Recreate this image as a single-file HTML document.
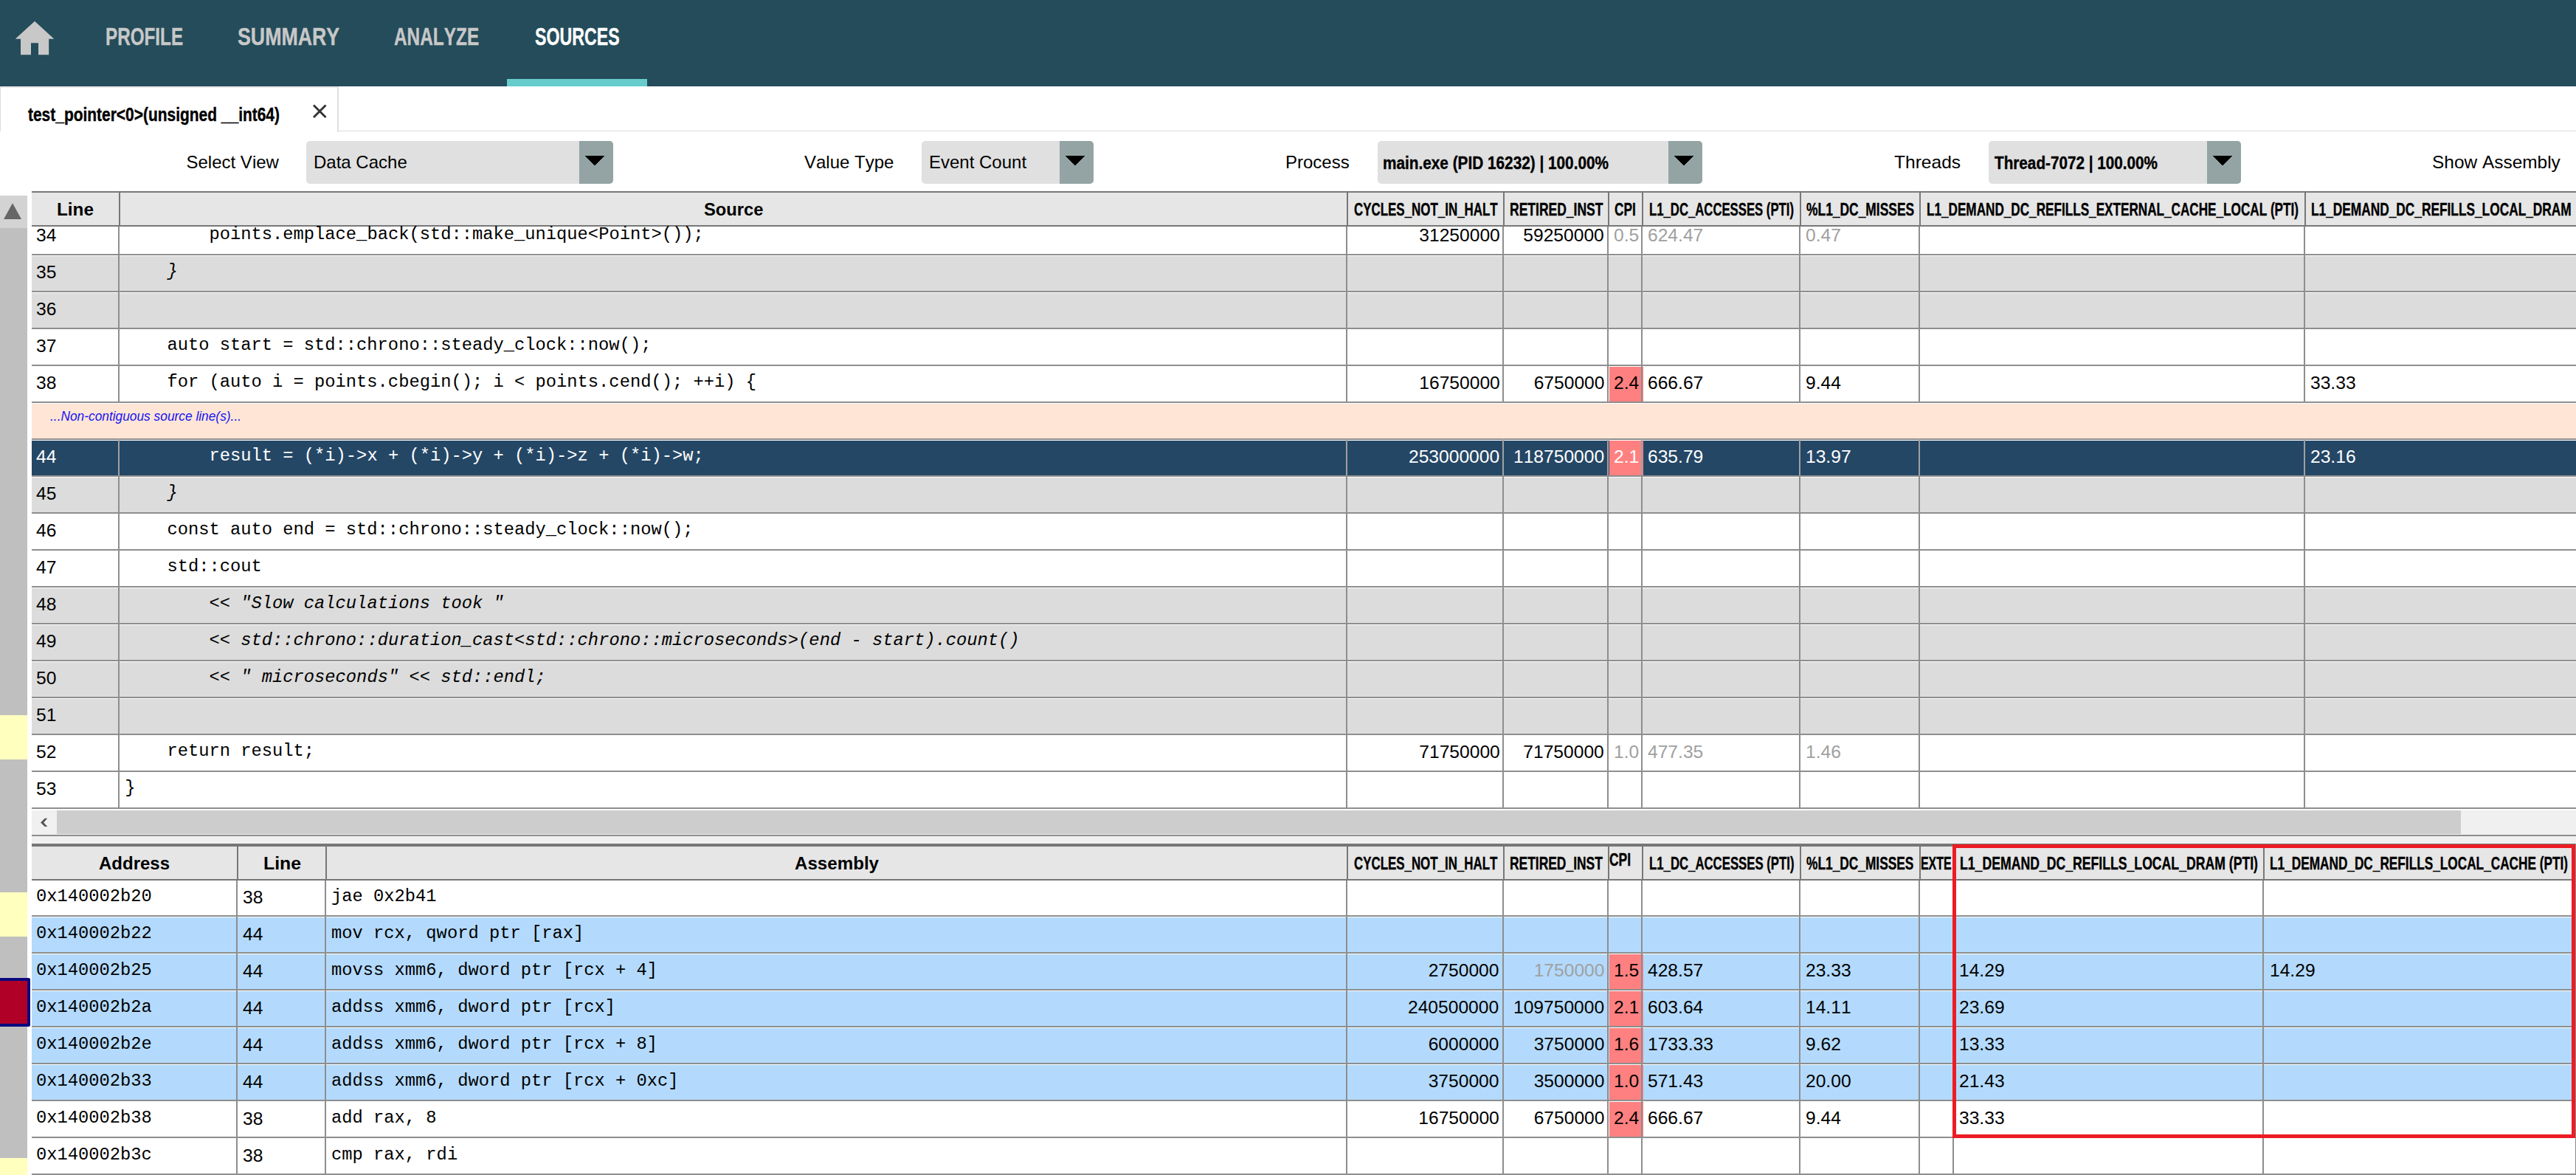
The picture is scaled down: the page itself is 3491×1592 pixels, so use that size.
<!DOCTYPE html>
<html><head><meta charset="utf-8"><title>Sources</title>
<style>
html,body{margin:0;padding:0;}
body{width:3491px;height:1592px;position:relative;overflow:hidden;background:#fff;font-family:"Liberation Sans", sans-serif;font-kerning:none;}
.r{position:absolute;}
.t{position:absolute;white-space:pre;}
</style></head><body>
<div class="r" style="left:0px;top:0px;width:3491px;height:117px;background:#244c5a;"></div>
<svg class="r" style="left:0;top:0" width="100" height="100"><polygon points="20.7,52.8 47,28.8 73.3,52.8 66.2,52.8 66.2,74.3 52,74.3 52,58.2 42,58.2 42,74.3 28,74.3 28,52.8" fill="#c8c8c8"/></svg>
<div class="t" style="left:142.80px;top:33.24px;font-size:33.5px;line-height:33.5px;color:#c8c8c8;font-family:'Liberation Sans', sans-serif;font-weight:bold;transform:scaleX(0.7240);transform-origin:0 0;-webkit-text-stroke:0.4px #c8c8c8;">PROFILE</div>
<div class="t" style="left:321.90px;top:33.24px;font-size:33.5px;line-height:33.5px;color:#c8c8c8;font-family:'Liberation Sans', sans-serif;font-weight:bold;transform:scaleX(0.7985);transform-origin:0 0;-webkit-text-stroke:0.4px #c8c8c8;">SUMMARY</div>
<div class="t" style="left:533.70px;top:33.24px;font-size:33.5px;line-height:33.5px;color:#c8c8c8;font-family:'Liberation Sans', sans-serif;font-weight:bold;transform:scaleX(0.7282);transform-origin:0 0;-webkit-text-stroke:0.4px #c8c8c8;">ANALYZE</div>
<div class="t" style="left:724.70px;top:33.24px;font-size:33.5px;line-height:33.5px;color:#ffffff;font-family:'Liberation Sans', sans-serif;font-weight:bold;transform:scaleX(0.6917);transform-origin:0 0;-webkit-text-stroke:0.4px #ffffff;">SOURCES</div>
<div class="r" style="left:687px;top:107px;width:190px;height:10px;background:#66cccc;"></div>
<div class="r" style="left:0px;top:117px;width:459px;height:2px;background:#e8e8e8;"></div>
<div class="r" style="left:0px;top:117px;width:1px;height:61px;background:#dcdcdc;"></div>
<div class="r" style="left:457px;top:117px;width:2px;height:62px;background:#e0e0e0;"></div>
<div class="r" style="left:459px;top:177px;width:3032px;height:1px;background:#dcdcdc;"></div>
<div class="t" style="left:38.00px;top:141.89px;font-size:26px;line-height:26px;color:#000;font-family:'Liberation Sans', sans-serif;font-weight:bold;transform:scaleX(0.8055);transform-origin:0 0;-webkit-text-stroke:0.4px #000;">test_pointer&lt;0&gt;(unsigned __int64)</div>
<svg class="r" style="left:420px;top:138px" width="26" height="26"><path d="M5,4.5 L21.5,21 M21.5,4.5 L5,21" stroke="#333" stroke-width="2.9" fill="none"/></svg>
<div class="t" style="left:252.50px;top:208.48px;font-size:24px;line-height:24px;color:#000;">Select View</div>
<div class="r" style="left:415px;top:191px;width:416px;height:58px;background:#e0e0e0;border-radius:5px;"></div>
<div class="r" style="left:785px;top:191px;width:46px;height:58px;background:#94a4a4;border-radius:0 5px 5px 0;"></div>
<svg class="r" style="left:793px;top:211px" width="26" height="15"><polygon points="0,0 26,0 13,14" fill="#000" shape-rendering="crispEdges"/></svg>
<div class="t" style="left:425.00px;top:208.48px;font-size:24px;line-height:24px;color:#000;">Data Cache</div>
<div class="t" style="left:1090.00px;top:208.48px;font-size:24px;line-height:24px;color:#000;">Value Type</div>
<div class="r" style="left:1249px;top:191px;width:233px;height:58px;background:#e0e0e0;border-radius:5px;"></div>
<div class="r" style="left:1436px;top:191px;width:46px;height:58px;background:#94a4a4;border-radius:0 5px 5px 0;"></div>
<svg class="r" style="left:1444px;top:211px" width="26" height="15"><polygon points="0,0 26,0 13,14" fill="#000" shape-rendering="crispEdges"/></svg>
<div class="t" style="left:1259.00px;top:208.48px;font-size:24px;line-height:24px;color:#000;">Event Count</div>
<div class="t" style="left:1742.00px;top:208.48px;font-size:24px;line-height:24px;color:#000;">Process</div>
<div class="r" style="left:1867px;top:191px;width:440px;height:58px;background:#e0e0e0;border-radius:5px;"></div>
<div class="r" style="left:2261px;top:191px;width:46px;height:58px;background:#94a4a4;border-radius:0 5px 5px 0;"></div>
<svg class="r" style="left:2269px;top:211px" width="26" height="15"><polygon points="0,0 26,0 13,14" fill="#000" shape-rendering="crispEdges"/></svg>
<div class="t" style="left:1874.00px;top:209.90px;font-size:23.5px;line-height:23.5px;color:#000;font-family:'Liberation Sans', sans-serif;font-weight:bold;transform:scaleX(0.8838);transform-origin:0 0;-webkit-text-stroke:0.4px #000;">main.exe (PID 16232) | 100.00%</div>
<div class="t" style="left:2566.50px;top:208.48px;font-size:24px;line-height:24px;color:#000;transform:scaleX(1.0230);transform-origin:0 0;">Threads</div>
<div class="r" style="left:2695px;top:191px;width:342px;height:58px;background:#e0e0e0;border-radius:5px;"></div>
<div class="r" style="left:2991px;top:191px;width:46px;height:58px;background:#94a4a4;border-radius:0 5px 5px 0;"></div>
<svg class="r" style="left:2999px;top:211px" width="26" height="15"><polygon points="0,0 26,0 13,14" fill="#000" shape-rendering="crispEdges"/></svg>
<div class="t" style="left:2702.50px;top:209.90px;font-size:23.5px;line-height:23.5px;color:#000;font-family:'Liberation Sans', sans-serif;font-weight:bold;transform:scaleX(0.8810);transform-origin:0 0;-webkit-text-stroke:0.4px #000;">Thread-7072 | 100.00%</div>
<div class="t" style="left:3296.30px;top:208.48px;font-size:24px;line-height:24px;color:#000;transform:scaleX(1.0180);transform-origin:0 0;">Show Assembly</div>
<div class="r" style="left:0px;top:265px;width:37px;height:44px;background:#d3d3d3;"></div>
<svg class="r" style="left:0;top:265px" width="37" height="44"><polygon points="5,32 29,32 17,10.3" fill="#666"/></svg>
<div class="r" style="left:0px;top:309px;width:37px;height:1283px;background:#bfbfbf;"></div>
<div class="r" style="left:0px;top:969px;width:37px;height:60px;background:#ffffbe;"></div>
<div class="r" style="left:0px;top:1209px;width:37px;height:60px;background:#ffffbe;"></div>
<div class="r" style="left:0px;top:1325px;width:41px;height:66px;background:#b00028;box-sizing:border-box;border:4px solid #0a0a7e;border-left:none;border-radius:0 3px 3px 0;"></div>
<div class="r" style="left:0px;top:1569px;width:37px;height:23px;background:#ffffbe;"></div>
<div class="r" style="left:43px;top:259px;width:3448px;height:2px;background:#777777;"></div>
<div class="r" style="left:43px;top:261px;width:3448px;height:44px;background:#e6e6e6;"></div>
<div class="r" style="left:43px;top:305px;width:3448px;height:2px;background:#777777;"></div>
<div class="r" style="left:161px;top:261px;width:2px;height:44px;background:#777777;"></div>
<div class="r" style="left:1825px;top:261px;width:2px;height:44px;background:#777777;"></div>
<div class="r" style="left:2037px;top:261px;width:2px;height:44px;background:#777777;"></div>
<div class="r" style="left:2179px;top:261px;width:2px;height:44px;background:#777777;"></div>
<div class="r" style="left:2225px;top:261px;width:2px;height:44px;background:#777777;"></div>
<div class="r" style="left:2439px;top:261px;width:2px;height:44px;background:#777777;"></div>
<div class="r" style="left:2601px;top:261px;width:2px;height:44px;background:#777777;"></div>
<div class="r" style="left:3123px;top:261px;width:2px;height:44px;background:#777777;"></div>
<div class="t" style="left:77.00px;top:272.48px;font-size:24px;line-height:24px;color:#000;font-family:'Liberation Sans', sans-serif;font-weight:bold;transform:scaleX(1.0135);transform-origin:0 0;">Line</div>
<div class="t" style="left:953.50px;top:272.48px;font-size:24px;line-height:24px;color:#000;font-family:'Liberation Sans', sans-serif;font-weight:bold;transform:scaleX(0.9894);transform-origin:0 0;">Source</div>
<div class="t" style="left:1834.50px;top:272.48px;font-size:24px;line-height:24px;color:#000;font-family:'Liberation Sans', sans-serif;font-weight:bold;transform:scaleX(0.7053);transform-origin:0 0;-webkit-text-stroke:0.4px #000;">CYCLES_NOT_IN_HALT</div>
<div class="t" style="left:2046.00px;top:272.48px;font-size:24px;line-height:24px;color:#000;font-family:'Liberation Sans', sans-serif;font-weight:bold;transform:scaleX(0.7297);transform-origin:0 0;-webkit-text-stroke:0.4px #000;">RETIRED_INST</div>
<div class="t" style="left:2188.30px;top:272.48px;font-size:24px;line-height:24px;color:#000;font-family:'Liberation Sans', sans-serif;font-weight:bold;transform:scaleX(0.7174);transform-origin:0 0;-webkit-text-stroke:0.4px #000;">CPI</div>
<div class="t" style="left:2234.50px;top:272.48px;font-size:24px;line-height:24px;color:#000;font-family:'Liberation Sans', sans-serif;font-weight:bold;transform:scaleX(0.6965);transform-origin:0 0;-webkit-text-stroke:0.4px #000;">L1_DC_ACCESSES (PTI)</div>
<div class="t" style="left:2448.00px;top:272.48px;font-size:24px;line-height:24px;color:#000;font-family:'Liberation Sans', sans-serif;font-weight:bold;transform:scaleX(0.7259);transform-origin:0 0;-webkit-text-stroke:0.4px #000;">%L1_DC_MISSES</div>
<div class="t" style="left:2611.20px;top:272.48px;font-size:24px;line-height:24px;color:#000;font-family:'Liberation Sans', sans-serif;font-weight:bold;transform:scaleX(0.7145);transform-origin:0 0;-webkit-text-stroke:0.4px #000;">L1_DEMAND_DC_REFILLS_EXTERNAL_CACHE_LOCAL (PTI)</div>
<div class="t" style="left:3131.50px;top:272.48px;font-size:24px;line-height:24px;color:#000;font-family:'Liberation Sans', sans-serif;font-weight:bold;transform:scaleX(0.7207);transform-origin:0 0;-webkit-text-stroke:0.4px #000;">L1_DEMAND_DC_REFILLS_LOCAL_DRAM</div>
<div class="r" style="left:43px;top:307px;width:3448px;height:37px;background:#ffffff;"></div>
<div class="r" style="left:160px;top:307px;width:2px;height:39px;background:#8e8e8e;"></div>
<div class="r" style="left:1824px;top:307px;width:2px;height:39px;background:#8e8e8e;"></div>
<div class="r" style="left:2036px;top:307px;width:2px;height:39px;background:#8e8e8e;"></div>
<div class="r" style="left:2178px;top:307px;width:2px;height:39px;background:#8e8e8e;"></div>
<div class="r" style="left:2224px;top:307px;width:2px;height:39px;background:#8e8e8e;"></div>
<div class="r" style="left:2438px;top:307px;width:2px;height:39px;background:#8e8e8e;"></div>
<div class="r" style="left:2600px;top:307px;width:2px;height:39px;background:#8e8e8e;"></div>
<div class="r" style="left:3122px;top:307px;width:2px;height:39px;background:#8e8e8e;"></div>
<div class="r" style="left:43px;top:344px;width:3448px;height:2px;background:#8e8e8e;"></div>
<div class="t" style="left:48.50px;top:306.88px;font-size:24px;line-height:24px;color:#000;transform:scaleX(1.0250);transform-origin:0 0;">34</div>
<div class="t" style="left:283.46px;top:306.28px;font-size:23.78px;line-height:23.78px;color:#000;font-family:'Liberation Mono', monospace;">points.emplace_back(std::make_unique&lt;Point&gt;());</div>
<div class="t" style="left:1925.72px;top:306.58px;font-size:24px;line-height:24px;color:#000;transform:scaleX(1.0250);transform-origin:100% 0;">31250000</div>
<div class="t" style="left:2067.22px;top:306.58px;font-size:24px;line-height:24px;color:#000;transform:scaleX(1.0250);transform-origin:100% 0;">59250000</div>
<div class="t" style="left:2187.00px;top:306.58px;font-size:24px;line-height:24px;color:#a0a0a0;transform:scaleX(1.0250);transform-origin:0 0;">0.5</div>
<div class="t" style="left:2232.50px;top:306.58px;font-size:24px;line-height:24px;color:#a0a0a0;transform:scaleX(1.0250);transform-origin:0 0;">624.47</div>
<div class="t" style="left:2446.50px;top:306.58px;font-size:24px;line-height:24px;color:#a0a0a0;transform:scaleX(1.0250);transform-origin:0 0;">0.47</div>
<div class="r" style="left:43px;top:346px;width:3448px;height:1px;background:#ffffff;"></div>
<div class="r" style="left:43px;top:347px;width:3448px;height:47px;background:#dcdcdc;"></div>
<div class="r" style="left:160px;top:344px;width:2px;height:52px;background:#8e8e8e;"></div>
<div class="r" style="left:1824px;top:344px;width:2px;height:52px;background:#8e8e8e;"></div>
<div class="r" style="left:2036px;top:344px;width:2px;height:52px;background:#8e8e8e;"></div>
<div class="r" style="left:2178px;top:344px;width:2px;height:52px;background:#8e8e8e;"></div>
<div class="r" style="left:2224px;top:344px;width:2px;height:52px;background:#8e8e8e;"></div>
<div class="r" style="left:2438px;top:344px;width:2px;height:52px;background:#8e8e8e;"></div>
<div class="r" style="left:2600px;top:344px;width:2px;height:52px;background:#8e8e8e;"></div>
<div class="r" style="left:3122px;top:344px;width:2px;height:52px;background:#8e8e8e;"></div>
<div class="r" style="left:43px;top:394px;width:3448px;height:2px;background:#8e8e8e;"></div>
<div class="t" style="left:48.50px;top:356.88px;font-size:24px;line-height:24px;color:#000;transform:scaleX(1.0250);transform-origin:0 0;">35</div>
<div class="t" style="left:226.38px;top:356.28px;font-size:23.78px;line-height:23.78px;color:#000;font-family:'Liberation Mono', monospace;font-style:italic;">}</div>
<div class="r" style="left:43px;top:396px;width:3448px;height:1px;background:#ffffff;"></div>
<div class="r" style="left:43px;top:397px;width:3448px;height:47px;background:#dcdcdc;"></div>
<div class="r" style="left:160px;top:394px;width:2px;height:52px;background:#8e8e8e;"></div>
<div class="r" style="left:1824px;top:394px;width:2px;height:52px;background:#8e8e8e;"></div>
<div class="r" style="left:2036px;top:394px;width:2px;height:52px;background:#8e8e8e;"></div>
<div class="r" style="left:2178px;top:394px;width:2px;height:52px;background:#8e8e8e;"></div>
<div class="r" style="left:2224px;top:394px;width:2px;height:52px;background:#8e8e8e;"></div>
<div class="r" style="left:2438px;top:394px;width:2px;height:52px;background:#8e8e8e;"></div>
<div class="r" style="left:2600px;top:394px;width:2px;height:52px;background:#8e8e8e;"></div>
<div class="r" style="left:3122px;top:394px;width:2px;height:52px;background:#8e8e8e;"></div>
<div class="r" style="left:43px;top:444px;width:3448px;height:2px;background:#8e8e8e;"></div>
<div class="t" style="left:48.50px;top:406.88px;font-size:24px;line-height:24px;color:#000;transform:scaleX(1.0250);transform-origin:0 0;">36</div>
<div class="r" style="left:43px;top:446px;width:3448px;height:1px;background:#ffffff;"></div>
<div class="r" style="left:43px;top:447px;width:3448px;height:47px;background:#ffffff;"></div>
<div class="r" style="left:160px;top:444px;width:2px;height:52px;background:#8e8e8e;"></div>
<div class="r" style="left:1824px;top:444px;width:2px;height:52px;background:#8e8e8e;"></div>
<div class="r" style="left:2036px;top:444px;width:2px;height:52px;background:#8e8e8e;"></div>
<div class="r" style="left:2178px;top:444px;width:2px;height:52px;background:#8e8e8e;"></div>
<div class="r" style="left:2224px;top:444px;width:2px;height:52px;background:#8e8e8e;"></div>
<div class="r" style="left:2438px;top:444px;width:2px;height:52px;background:#8e8e8e;"></div>
<div class="r" style="left:2600px;top:444px;width:2px;height:52px;background:#8e8e8e;"></div>
<div class="r" style="left:3122px;top:444px;width:2px;height:52px;background:#8e8e8e;"></div>
<div class="r" style="left:43px;top:494px;width:3448px;height:2px;background:#8e8e8e;"></div>
<div class="t" style="left:48.50px;top:456.88px;font-size:24px;line-height:24px;color:#000;transform:scaleX(1.0250);transform-origin:0 0;">37</div>
<div class="t" style="left:226.38px;top:456.28px;font-size:23.78px;line-height:23.78px;color:#000;font-family:'Liberation Mono', monospace;">auto start = std::chrono::steady_clock::now();</div>
<div class="r" style="left:43px;top:496px;width:3448px;height:1px;background:#ffffff;"></div>
<div class="r" style="left:43px;top:497px;width:3448px;height:47px;background:#ffffff;"></div>
<div class="r" style="left:2181px;top:497px;width:46px;height:47px;background:#ff8080;"></div>
<div class="r" style="left:160px;top:494px;width:2px;height:52px;background:#8e8e8e;"></div>
<div class="r" style="left:1824px;top:494px;width:2px;height:52px;background:#8e8e8e;"></div>
<div class="r" style="left:2036px;top:494px;width:2px;height:52px;background:#8e8e8e;"></div>
<div class="r" style="left:2178px;top:494px;width:2px;height:52px;background:#8e8e8e;"></div>
<div class="r" style="left:2224px;top:494px;width:2px;height:52px;background:#8e8e8e;"></div>
<div class="r" style="left:2438px;top:494px;width:2px;height:52px;background:#8e8e8e;"></div>
<div class="r" style="left:2600px;top:494px;width:2px;height:52px;background:#8e8e8e;"></div>
<div class="r" style="left:3122px;top:494px;width:2px;height:52px;background:#8e8e8e;"></div>
<div class="r" style="left:43px;top:544px;width:3448px;height:2px;background:#8e8e8e;"></div>
<div class="t" style="left:48.50px;top:506.88px;font-size:24px;line-height:24px;color:#000;transform:scaleX(1.0250);transform-origin:0 0;">38</div>
<div class="t" style="left:226.38px;top:506.28px;font-size:23.78px;line-height:23.78px;color:#000;font-family:'Liberation Mono', monospace;">for (auto i = points.cbegin(); i &lt; points.cend(); ++i) {</div>
<div class="t" style="left:1925.72px;top:506.58px;font-size:24px;line-height:24px;color:#000;transform:scaleX(1.0250);transform-origin:100% 0;">16750000</div>
<div class="t" style="left:2080.57px;top:506.58px;font-size:24px;line-height:24px;color:#000;transform:scaleX(1.0250);transform-origin:100% 0;">6750000</div>
<div class="t" style="left:2187.00px;top:506.58px;font-size:24px;line-height:24px;color:#000;transform:scaleX(1.0250);transform-origin:0 0;">2.4</div>
<div class="t" style="left:2232.50px;top:506.58px;font-size:24px;line-height:24px;color:#000;transform:scaleX(1.0250);transform-origin:0 0;">666.67</div>
<div class="t" style="left:2446.50px;top:506.58px;font-size:24px;line-height:24px;color:#000;transform:scaleX(1.0250);transform-origin:0 0;">9.44</div>
<div class="t" style="left:3130.50px;top:506.58px;font-size:24px;line-height:24px;color:#000;transform:scaleX(1.0250);transform-origin:0 0;">33.33</div>
<div class="r" style="left:43px;top:546px;width:3448px;height:1px;background:#ffffff;"></div>
<div class="r" style="left:43px;top:547px;width:3448px;height:47px;background:#fee5d5;"></div>
<div class="r" style="left:43px;top:594px;width:3448px;height:2px;background:#8e8e8e;"></div>
<div class="t" style="left:68.00px;top:555.36px;font-size:18px;line-height:18px;color:#1414f4;font-family:'Liberation Sans', sans-serif;font-style:italic;transform:scaleX(0.9624);transform-origin:0 0;">...Non-contiguous source line(s)...</div>
<div class="r" style="left:43px;top:596px;width:3448px;height:1px;background:#ffffff;"></div>
<div class="r" style="left:43px;top:597px;width:3448px;height:47px;background:#254766;"></div>
<div class="r" style="left:2181px;top:597px;width:46px;height:47px;background:#ff8080;"></div>
<div class="r" style="left:160px;top:594px;width:2px;height:52px;background:#a0a0a0;"></div>
<div class="r" style="left:1824px;top:594px;width:2px;height:52px;background:#a0a0a0;"></div>
<div class="r" style="left:2036px;top:594px;width:2px;height:52px;background:#a0a0a0;"></div>
<div class="r" style="left:2178px;top:594px;width:2px;height:52px;background:#a0a0a0;"></div>
<div class="r" style="left:2224px;top:594px;width:2px;height:52px;background:#a0a0a0;"></div>
<div class="r" style="left:2438px;top:594px;width:2px;height:52px;background:#a0a0a0;"></div>
<div class="r" style="left:2600px;top:594px;width:2px;height:52px;background:#a0a0a0;"></div>
<div class="r" style="left:3122px;top:594px;width:2px;height:52px;background:#a0a0a0;"></div>
<div class="r" style="left:43px;top:644px;width:3448px;height:2px;background:#8e8e8e;"></div>
<div class="t" style="left:48.50px;top:606.88px;font-size:24px;line-height:24px;color:#fff;transform:scaleX(1.0250);transform-origin:0 0;">44</div>
<div class="t" style="left:283.46px;top:606.28px;font-size:23.78px;line-height:23.78px;color:#fff;font-family:'Liberation Mono', monospace;">result = (*i)-&gt;x + (*i)-&gt;y + (*i)-&gt;z + (*i)-&gt;w;</div>
<div class="t" style="left:1912.37px;top:606.58px;font-size:24px;line-height:24px;color:#fff;transform:scaleX(1.0250);transform-origin:100% 0;">253000000</div>
<div class="t" style="left:2053.87px;top:606.58px;font-size:24px;line-height:24px;color:#fff;transform:scaleX(1.0250);transform-origin:100% 0;">118750000</div>
<div class="t" style="left:2187.00px;top:606.58px;font-size:24px;line-height:24px;color:#fff;transform:scaleX(1.0250);transform-origin:0 0;">2.1</div>
<div class="t" style="left:2232.50px;top:606.58px;font-size:24px;line-height:24px;color:#fff;transform:scaleX(1.0250);transform-origin:0 0;">635.79</div>
<div class="t" style="left:2446.50px;top:606.58px;font-size:24px;line-height:24px;color:#fff;transform:scaleX(1.0250);transform-origin:0 0;">13.97</div>
<div class="t" style="left:3130.50px;top:606.58px;font-size:24px;line-height:24px;color:#fff;transform:scaleX(1.0250);transform-origin:0 0;">23.16</div>
<div class="r" style="left:43px;top:646px;width:3448px;height:1px;background:#ffffff;"></div>
<div class="r" style="left:43px;top:647px;width:3448px;height:47px;background:#dcdcdc;"></div>
<div class="r" style="left:160px;top:644px;width:2px;height:52px;background:#8e8e8e;"></div>
<div class="r" style="left:1824px;top:644px;width:2px;height:52px;background:#8e8e8e;"></div>
<div class="r" style="left:2036px;top:644px;width:2px;height:52px;background:#8e8e8e;"></div>
<div class="r" style="left:2178px;top:644px;width:2px;height:52px;background:#8e8e8e;"></div>
<div class="r" style="left:2224px;top:644px;width:2px;height:52px;background:#8e8e8e;"></div>
<div class="r" style="left:2438px;top:644px;width:2px;height:52px;background:#8e8e8e;"></div>
<div class="r" style="left:2600px;top:644px;width:2px;height:52px;background:#8e8e8e;"></div>
<div class="r" style="left:3122px;top:644px;width:2px;height:52px;background:#8e8e8e;"></div>
<div class="r" style="left:43px;top:694px;width:3448px;height:2px;background:#8e8e8e;"></div>
<div class="t" style="left:48.50px;top:656.88px;font-size:24px;line-height:24px;color:#000;transform:scaleX(1.0250);transform-origin:0 0;">45</div>
<div class="t" style="left:226.38px;top:656.28px;font-size:23.78px;line-height:23.78px;color:#000;font-family:'Liberation Mono', monospace;font-style:italic;">}</div>
<div class="r" style="left:43px;top:696px;width:3448px;height:1px;background:#ffffff;"></div>
<div class="r" style="left:43px;top:697px;width:3448px;height:47px;background:#ffffff;"></div>
<div class="r" style="left:160px;top:694px;width:2px;height:52px;background:#8e8e8e;"></div>
<div class="r" style="left:1824px;top:694px;width:2px;height:52px;background:#8e8e8e;"></div>
<div class="r" style="left:2036px;top:694px;width:2px;height:52px;background:#8e8e8e;"></div>
<div class="r" style="left:2178px;top:694px;width:2px;height:52px;background:#8e8e8e;"></div>
<div class="r" style="left:2224px;top:694px;width:2px;height:52px;background:#8e8e8e;"></div>
<div class="r" style="left:2438px;top:694px;width:2px;height:52px;background:#8e8e8e;"></div>
<div class="r" style="left:2600px;top:694px;width:2px;height:52px;background:#8e8e8e;"></div>
<div class="r" style="left:3122px;top:694px;width:2px;height:52px;background:#8e8e8e;"></div>
<div class="r" style="left:43px;top:744px;width:3448px;height:2px;background:#8e8e8e;"></div>
<div class="t" style="left:48.50px;top:706.88px;font-size:24px;line-height:24px;color:#000;transform:scaleX(1.0250);transform-origin:0 0;">46</div>
<div class="t" style="left:226.38px;top:706.28px;font-size:23.78px;line-height:23.78px;color:#000;font-family:'Liberation Mono', monospace;">const auto end = std::chrono::steady_clock::now();</div>
<div class="r" style="left:43px;top:746px;width:3448px;height:1px;background:#ffffff;"></div>
<div class="r" style="left:43px;top:747px;width:3448px;height:47px;background:#ffffff;"></div>
<div class="r" style="left:160px;top:744px;width:2px;height:52px;background:#8e8e8e;"></div>
<div class="r" style="left:1824px;top:744px;width:2px;height:52px;background:#8e8e8e;"></div>
<div class="r" style="left:2036px;top:744px;width:2px;height:52px;background:#8e8e8e;"></div>
<div class="r" style="left:2178px;top:744px;width:2px;height:52px;background:#8e8e8e;"></div>
<div class="r" style="left:2224px;top:744px;width:2px;height:52px;background:#8e8e8e;"></div>
<div class="r" style="left:2438px;top:744px;width:2px;height:52px;background:#8e8e8e;"></div>
<div class="r" style="left:2600px;top:744px;width:2px;height:52px;background:#8e8e8e;"></div>
<div class="r" style="left:3122px;top:744px;width:2px;height:52px;background:#8e8e8e;"></div>
<div class="r" style="left:43px;top:794px;width:3448px;height:2px;background:#8e8e8e;"></div>
<div class="t" style="left:48.50px;top:756.88px;font-size:24px;line-height:24px;color:#000;transform:scaleX(1.0250);transform-origin:0 0;">47</div>
<div class="t" style="left:226.38px;top:756.28px;font-size:23.78px;line-height:23.78px;color:#000;font-family:'Liberation Mono', monospace;">std::cout</div>
<div class="r" style="left:43px;top:796px;width:3448px;height:1px;background:#ffffff;"></div>
<div class="r" style="left:43px;top:797px;width:3448px;height:47px;background:#dcdcdc;"></div>
<div class="r" style="left:160px;top:794px;width:2px;height:52px;background:#8e8e8e;"></div>
<div class="r" style="left:1824px;top:794px;width:2px;height:52px;background:#8e8e8e;"></div>
<div class="r" style="left:2036px;top:794px;width:2px;height:52px;background:#8e8e8e;"></div>
<div class="r" style="left:2178px;top:794px;width:2px;height:52px;background:#8e8e8e;"></div>
<div class="r" style="left:2224px;top:794px;width:2px;height:52px;background:#8e8e8e;"></div>
<div class="r" style="left:2438px;top:794px;width:2px;height:52px;background:#8e8e8e;"></div>
<div class="r" style="left:2600px;top:794px;width:2px;height:52px;background:#8e8e8e;"></div>
<div class="r" style="left:3122px;top:794px;width:2px;height:52px;background:#8e8e8e;"></div>
<div class="r" style="left:43px;top:844px;width:3448px;height:2px;background:#8e8e8e;"></div>
<div class="t" style="left:48.50px;top:806.88px;font-size:24px;line-height:24px;color:#000;transform:scaleX(1.0250);transform-origin:0 0;">48</div>
<div class="t" style="left:283.46px;top:806.28px;font-size:23.78px;line-height:23.78px;color:#000;font-family:'Liberation Mono', monospace;font-style:italic;">&lt;&lt; "Slow calculations took "</div>
<div class="r" style="left:43px;top:846px;width:3448px;height:1px;background:#ffffff;"></div>
<div class="r" style="left:43px;top:847px;width:3448px;height:47px;background:#dcdcdc;"></div>
<div class="r" style="left:160px;top:844px;width:2px;height:52px;background:#8e8e8e;"></div>
<div class="r" style="left:1824px;top:844px;width:2px;height:52px;background:#8e8e8e;"></div>
<div class="r" style="left:2036px;top:844px;width:2px;height:52px;background:#8e8e8e;"></div>
<div class="r" style="left:2178px;top:844px;width:2px;height:52px;background:#8e8e8e;"></div>
<div class="r" style="left:2224px;top:844px;width:2px;height:52px;background:#8e8e8e;"></div>
<div class="r" style="left:2438px;top:844px;width:2px;height:52px;background:#8e8e8e;"></div>
<div class="r" style="left:2600px;top:844px;width:2px;height:52px;background:#8e8e8e;"></div>
<div class="r" style="left:3122px;top:844px;width:2px;height:52px;background:#8e8e8e;"></div>
<div class="r" style="left:43px;top:894px;width:3448px;height:2px;background:#8e8e8e;"></div>
<div class="t" style="left:48.50px;top:856.88px;font-size:24px;line-height:24px;color:#000;transform:scaleX(1.0250);transform-origin:0 0;">49</div>
<div class="t" style="left:283.46px;top:856.28px;font-size:23.78px;line-height:23.78px;color:#000;font-family:'Liberation Mono', monospace;font-style:italic;">&lt;&lt; std::chrono::duration_cast&lt;std::chrono::microseconds&gt;(end - start).count()</div>
<div class="r" style="left:43px;top:896px;width:3448px;height:1px;background:#ffffff;"></div>
<div class="r" style="left:43px;top:897px;width:3448px;height:47px;background:#dcdcdc;"></div>
<div class="r" style="left:160px;top:894px;width:2px;height:52px;background:#8e8e8e;"></div>
<div class="r" style="left:1824px;top:894px;width:2px;height:52px;background:#8e8e8e;"></div>
<div class="r" style="left:2036px;top:894px;width:2px;height:52px;background:#8e8e8e;"></div>
<div class="r" style="left:2178px;top:894px;width:2px;height:52px;background:#8e8e8e;"></div>
<div class="r" style="left:2224px;top:894px;width:2px;height:52px;background:#8e8e8e;"></div>
<div class="r" style="left:2438px;top:894px;width:2px;height:52px;background:#8e8e8e;"></div>
<div class="r" style="left:2600px;top:894px;width:2px;height:52px;background:#8e8e8e;"></div>
<div class="r" style="left:3122px;top:894px;width:2px;height:52px;background:#8e8e8e;"></div>
<div class="r" style="left:43px;top:944px;width:3448px;height:2px;background:#8e8e8e;"></div>
<div class="t" style="left:48.50px;top:906.88px;font-size:24px;line-height:24px;color:#000;transform:scaleX(1.0250);transform-origin:0 0;">50</div>
<div class="t" style="left:283.46px;top:906.28px;font-size:23.78px;line-height:23.78px;color:#000;font-family:'Liberation Mono', monospace;font-style:italic;">&lt;&lt; " microseconds" &lt;&lt; std::endl;</div>
<div class="r" style="left:43px;top:946px;width:3448px;height:1px;background:#ffffff;"></div>
<div class="r" style="left:43px;top:947px;width:3448px;height:47px;background:#dcdcdc;"></div>
<div class="r" style="left:160px;top:944px;width:2px;height:52px;background:#8e8e8e;"></div>
<div class="r" style="left:1824px;top:944px;width:2px;height:52px;background:#8e8e8e;"></div>
<div class="r" style="left:2036px;top:944px;width:2px;height:52px;background:#8e8e8e;"></div>
<div class="r" style="left:2178px;top:944px;width:2px;height:52px;background:#8e8e8e;"></div>
<div class="r" style="left:2224px;top:944px;width:2px;height:52px;background:#8e8e8e;"></div>
<div class="r" style="left:2438px;top:944px;width:2px;height:52px;background:#8e8e8e;"></div>
<div class="r" style="left:2600px;top:944px;width:2px;height:52px;background:#8e8e8e;"></div>
<div class="r" style="left:3122px;top:944px;width:2px;height:52px;background:#8e8e8e;"></div>
<div class="r" style="left:43px;top:994px;width:3448px;height:2px;background:#8e8e8e;"></div>
<div class="t" style="left:48.50px;top:956.88px;font-size:24px;line-height:24px;color:#000;transform:scaleX(1.0250);transform-origin:0 0;">51</div>
<div class="r" style="left:43px;top:996px;width:3448px;height:1px;background:#ffffff;"></div>
<div class="r" style="left:43px;top:997px;width:3448px;height:47px;background:#ffffff;"></div>
<div class="r" style="left:160px;top:994px;width:2px;height:52px;background:#8e8e8e;"></div>
<div class="r" style="left:1824px;top:994px;width:2px;height:52px;background:#8e8e8e;"></div>
<div class="r" style="left:2036px;top:994px;width:2px;height:52px;background:#8e8e8e;"></div>
<div class="r" style="left:2178px;top:994px;width:2px;height:52px;background:#8e8e8e;"></div>
<div class="r" style="left:2224px;top:994px;width:2px;height:52px;background:#8e8e8e;"></div>
<div class="r" style="left:2438px;top:994px;width:2px;height:52px;background:#8e8e8e;"></div>
<div class="r" style="left:2600px;top:994px;width:2px;height:52px;background:#8e8e8e;"></div>
<div class="r" style="left:3122px;top:994px;width:2px;height:52px;background:#8e8e8e;"></div>
<div class="r" style="left:43px;top:1044px;width:3448px;height:2px;background:#8e8e8e;"></div>
<div class="t" style="left:48.50px;top:1006.88px;font-size:24px;line-height:24px;color:#000;transform:scaleX(1.0250);transform-origin:0 0;">52</div>
<div class="t" style="left:226.38px;top:1006.28px;font-size:23.78px;line-height:23.78px;color:#000;font-family:'Liberation Mono', monospace;">return result;</div>
<div class="t" style="left:1925.72px;top:1006.58px;font-size:24px;line-height:24px;color:#000;transform:scaleX(1.0250);transform-origin:100% 0;">71750000</div>
<div class="t" style="left:2067.22px;top:1006.58px;font-size:24px;line-height:24px;color:#000;transform:scaleX(1.0250);transform-origin:100% 0;">71750000</div>
<div class="t" style="left:2187.00px;top:1006.58px;font-size:24px;line-height:24px;color:#a0a0a0;transform:scaleX(1.0250);transform-origin:0 0;">1.0</div>
<div class="t" style="left:2232.50px;top:1006.58px;font-size:24px;line-height:24px;color:#a0a0a0;transform:scaleX(1.0250);transform-origin:0 0;">477.35</div>
<div class="t" style="left:2446.50px;top:1006.58px;font-size:24px;line-height:24px;color:#a0a0a0;transform:scaleX(1.0250);transform-origin:0 0;">1.46</div>
<div class="r" style="left:43px;top:1046px;width:3448px;height:1px;background:#ffffff;"></div>
<div class="r" style="left:43px;top:1047px;width:3448px;height:47px;background:#ffffff;"></div>
<div class="r" style="left:160px;top:1044px;width:2px;height:52px;background:#8e8e8e;"></div>
<div class="r" style="left:1824px;top:1044px;width:2px;height:52px;background:#8e8e8e;"></div>
<div class="r" style="left:2036px;top:1044px;width:2px;height:52px;background:#8e8e8e;"></div>
<div class="r" style="left:2178px;top:1044px;width:2px;height:52px;background:#8e8e8e;"></div>
<div class="r" style="left:2224px;top:1044px;width:2px;height:52px;background:#8e8e8e;"></div>
<div class="r" style="left:2438px;top:1044px;width:2px;height:52px;background:#8e8e8e;"></div>
<div class="r" style="left:2600px;top:1044px;width:2px;height:52px;background:#8e8e8e;"></div>
<div class="r" style="left:3122px;top:1044px;width:2px;height:52px;background:#8e8e8e;"></div>
<div class="r" style="left:43px;top:1094px;width:3448px;height:2px;background:#8e8e8e;"></div>
<div class="t" style="left:48.50px;top:1056.88px;font-size:24px;line-height:24px;color:#000;transform:scaleX(1.0250);transform-origin:0 0;">53</div>
<div class="t" style="left:169.30px;top:1056.28px;font-size:23.78px;line-height:23.78px;color:#000;font-family:'Liberation Mono', monospace;">}</div>
<div class="r" style="left:43px;top:1096px;width:3448px;height:2px;background:#ffffff;"></div>
<div class="r" style="left:43px;top:1098px;width:3448px;height:33px;background:#f0f0f0;"></div>
<div class="r" style="left:77px;top:1098px;width:3258px;height:32px;background:#cdcdcd;"></div>
<svg class="r" style="left:50px;top:1104px" width="20" height="22"><polygon points="5,10.4 10.7,4.8 14.2,4.8 9.2,10.4 14.2,16.1 10.7,16.1" fill="#555"/></svg>
<div class="r" style="left:43px;top:1131px;width:3448px;height:2px;background:#8e8e8e;"></div>
<div class="r" style="left:43px;top:1133px;width:3448px;height:10px;background:#f0f0f0;"></div>
<div class="r" style="left:43px;top:1143px;width:3448px;height:4px;background:#777777;"></div>
<div class="r" style="left:43px;top:1147px;width:3448px;height:44px;background:#e6e6e6;"></div>
<div class="r" style="left:43px;top:1191px;width:3448px;height:2px;background:#777777;"></div>
<div class="r" style="left:321px;top:1147px;width:2px;height:44px;background:#777777;"></div>
<div class="r" style="left:441px;top:1147px;width:2px;height:44px;background:#777777;"></div>
<div class="r" style="left:1825px;top:1147px;width:2px;height:44px;background:#777777;"></div>
<div class="r" style="left:2037px;top:1147px;width:2px;height:44px;background:#777777;"></div>
<div class="r" style="left:2179px;top:1147px;width:2px;height:44px;background:#777777;"></div>
<div class="r" style="left:2225px;top:1147px;width:2px;height:44px;background:#777777;"></div>
<div class="r" style="left:2439px;top:1147px;width:2px;height:44px;background:#777777;"></div>
<div class="r" style="left:2601px;top:1147px;width:2px;height:44px;background:#777777;"></div>
<div class="r" style="left:2647px;top:1147px;width:2px;height:44px;background:#777777;"></div>
<div class="r" style="left:3067px;top:1147px;width:2px;height:44px;background:#777777;"></div>
<div class="t" style="left:133.50px;top:1158.38px;font-size:24px;line-height:24px;color:#000;font-family:'Liberation Sans', sans-serif;font-weight:bold;transform:scaleX(0.9996);transform-origin:0 0;">Address</div>
<div class="t" style="left:356.50px;top:1158.38px;font-size:24px;line-height:24px;color:#000;font-family:'Liberation Sans', sans-serif;font-weight:bold;transform:scaleX(1.0337);transform-origin:0 0;">Line</div>
<div class="t" style="left:1076.50px;top:1158.38px;font-size:24px;line-height:24px;color:#000;font-family:'Liberation Sans', sans-serif;font-weight:bold;transform:scaleX(1.0054);transform-origin:0 0;">Assembly</div>
<div class="t" style="left:1835.20px;top:1158.38px;font-size:24px;line-height:24px;color:#000;font-family:'Liberation Sans', sans-serif;font-weight:bold;transform:scaleX(0.7039);transform-origin:0 0;-webkit-text-stroke:0.4px #000;">CYCLES_NOT_IN_HALT</div>
<div class="t" style="left:2046.10px;top:1158.38px;font-size:24px;line-height:24px;color:#000;font-family:'Liberation Sans', sans-serif;font-weight:bold;transform:scaleX(0.7257);transform-origin:0 0;-webkit-text-stroke:0.4px #000;">RETIRED_INST</div>
<div class="t" style="left:2181.30px;top:1152.98px;font-size:24px;line-height:24px;color:#000;font-family:'Liberation Sans', sans-serif;font-weight:bold;transform:scaleX(0.7274);transform-origin:0 0;-webkit-text-stroke:0.4px #000;">CPI</div>
<div class="t" style="left:2234.90px;top:1158.38px;font-size:24px;line-height:24px;color:#000;font-family:'Liberation Sans', sans-serif;font-weight:bold;transform:scaleX(0.6983);transform-origin:0 0;-webkit-text-stroke:0.4px #000;">L1_DC_ACCESSES (PTI)</div>
<div class="t" style="left:2448.00px;top:1158.38px;font-size:24px;line-height:24px;color:#000;font-family:'Liberation Sans', sans-serif;font-weight:bold;transform:scaleX(0.7220);transform-origin:0 0;-webkit-text-stroke:0.4px #000;">%L1_DC_MISSES</div>
<div class="t" style="left:2603.30px;top:1158.38px;font-size:24px;line-height:24px;color:#000;font-family:'Liberation Sans', sans-serif;font-weight:bold;transform:scaleX(0.6637);transform-origin:0 0;-webkit-text-stroke:0.4px #000;">EXTE</div>
<div class="t" style="left:2655.50px;top:1158.38px;font-size:24px;line-height:24px;color:#000;font-family:'Liberation Sans', sans-serif;font-weight:bold;transform:scaleX(0.7354);transform-origin:0 0;-webkit-text-stroke:0.4px #000;">L1_DEMAND_DC_REFILLS_LOCAL_DRAM (PTI)</div>
<div class="t" style="left:3076.20px;top:1158.38px;font-size:24px;line-height:24px;color:#000;font-family:'Liberation Sans', sans-serif;font-weight:bold;transform:scaleX(0.7181);transform-origin:0 0;-webkit-text-stroke:0.4px #000;">L1_DEMAND_DC_REFILLS_LOCAL_CACHE (PTI)</div>
<div class="r" style="left:43px;top:1193px;width:3448px;height:47px;background:#ffffff;"></div>
<div class="r" style="left:320px;top:1193px;width:2px;height:49px;background:#8e8e8e;"></div>
<div class="r" style="left:440px;top:1193px;width:2px;height:49px;background:#8e8e8e;"></div>
<div class="r" style="left:1824px;top:1193px;width:2px;height:49px;background:#8e8e8e;"></div>
<div class="r" style="left:2036px;top:1193px;width:2px;height:49px;background:#8e8e8e;"></div>
<div class="r" style="left:2178px;top:1193px;width:2px;height:49px;background:#8e8e8e;"></div>
<div class="r" style="left:2224px;top:1193px;width:2px;height:49px;background:#8e8e8e;"></div>
<div class="r" style="left:2438px;top:1193px;width:2px;height:49px;background:#8e8e8e;"></div>
<div class="r" style="left:2600px;top:1193px;width:2px;height:49px;background:#8e8e8e;"></div>
<div class="r" style="left:2646px;top:1193px;width:2px;height:49px;background:#8e8e8e;"></div>
<div class="r" style="left:3066px;top:1193px;width:2px;height:49px;background:#8e8e8e;"></div>
<div class="r" style="left:43px;top:1240px;width:3448px;height:2px;background:#8e8e8e;"></div>
<div class="t" style="left:49.00px;top:1202.78px;font-size:23.78px;line-height:23.78px;color:#000;font-family:'Liberation Mono', monospace;">0x140002b20</div>
<div class="t" style="left:328.50px;top:1204.08px;font-size:24px;line-height:24px;color:#000;transform:scaleX(1.0250);transform-origin:0 0;">38</div>
<div class="t" style="left:449.00px;top:1202.78px;font-size:23.78px;line-height:23.78px;color:#000;font-family:'Liberation Mono', monospace;">jae 0x2b41</div>
<div class="r" style="left:43px;top:1242px;width:3448px;height:1px;background:#ffffff;"></div>
<div class="r" style="left:43px;top:1243px;width:3448px;height:47px;background:#b3dafd;"></div>
<div class="r" style="left:320px;top:1240px;width:2px;height:52px;background:#8e8e8e;"></div>
<div class="r" style="left:440px;top:1240px;width:2px;height:52px;background:#8e8e8e;"></div>
<div class="r" style="left:1824px;top:1240px;width:2px;height:52px;background:#8e8e8e;"></div>
<div class="r" style="left:2036px;top:1240px;width:2px;height:52px;background:#8e8e8e;"></div>
<div class="r" style="left:2178px;top:1240px;width:2px;height:52px;background:#8e8e8e;"></div>
<div class="r" style="left:2224px;top:1240px;width:2px;height:52px;background:#8e8e8e;"></div>
<div class="r" style="left:2438px;top:1240px;width:2px;height:52px;background:#8e8e8e;"></div>
<div class="r" style="left:2600px;top:1240px;width:2px;height:52px;background:#8e8e8e;"></div>
<div class="r" style="left:2646px;top:1240px;width:2px;height:52px;background:#8e8e8e;"></div>
<div class="r" style="left:3066px;top:1240px;width:2px;height:52px;background:#8e8e8e;"></div>
<div class="r" style="left:43px;top:1290px;width:3448px;height:2px;background:#8e8e8e;"></div>
<div class="t" style="left:49.00px;top:1252.78px;font-size:23.78px;line-height:23.78px;color:#000;font-family:'Liberation Mono', monospace;">0x140002b22</div>
<div class="t" style="left:328.50px;top:1254.08px;font-size:24px;line-height:24px;color:#000;transform:scaleX(1.0250);transform-origin:0 0;">44</div>
<div class="t" style="left:449.00px;top:1252.78px;font-size:23.78px;line-height:23.78px;color:#000;font-family:'Liberation Mono', monospace;">mov rcx, qword ptr [rax]</div>
<div class="r" style="left:43px;top:1292px;width:3448px;height:1px;background:#ffffff;"></div>
<div class="r" style="left:43px;top:1293px;width:3448px;height:47px;background:#b3dafd;"></div>
<div class="r" style="left:2181px;top:1293px;width:46px;height:47px;background:#ff8080;"></div>
<div class="r" style="left:320px;top:1290px;width:2px;height:52px;background:#8e8e8e;"></div>
<div class="r" style="left:440px;top:1290px;width:2px;height:52px;background:#8e8e8e;"></div>
<div class="r" style="left:1824px;top:1290px;width:2px;height:52px;background:#8e8e8e;"></div>
<div class="r" style="left:2036px;top:1290px;width:2px;height:52px;background:#8e8e8e;"></div>
<div class="r" style="left:2178px;top:1290px;width:2px;height:52px;background:#8e8e8e;"></div>
<div class="r" style="left:2224px;top:1290px;width:2px;height:52px;background:#8e8e8e;"></div>
<div class="r" style="left:2438px;top:1290px;width:2px;height:52px;background:#8e8e8e;"></div>
<div class="r" style="left:2600px;top:1290px;width:2px;height:52px;background:#8e8e8e;"></div>
<div class="r" style="left:2646px;top:1290px;width:2px;height:52px;background:#8e8e8e;"></div>
<div class="r" style="left:3066px;top:1290px;width:2px;height:52px;background:#8e8e8e;"></div>
<div class="r" style="left:43px;top:1340px;width:3448px;height:2px;background:#8e8e8e;"></div>
<div class="t" style="left:49.00px;top:1302.78px;font-size:23.78px;line-height:23.78px;color:#000;font-family:'Liberation Mono', monospace;">0x140002b25</div>
<div class="t" style="left:328.50px;top:1304.08px;font-size:24px;line-height:24px;color:#000;transform:scaleX(1.0250);transform-origin:0 0;">44</div>
<div class="t" style="left:449.00px;top:1302.78px;font-size:23.78px;line-height:23.78px;color:#000;font-family:'Liberation Mono', monospace;">movss xmm6, dword ptr [rcx + 4]</div>
<div class="t" style="left:1938.07px;top:1303.48px;font-size:24px;line-height:24px;color:#000;transform:scaleX(1.0250);transform-origin:100% 0;">2750000</div>
<div class="t" style="left:2080.57px;top:1303.48px;font-size:24px;line-height:24px;color:#a0a0a0;transform:scaleX(1.0250);transform-origin:100% 0;">1750000</div>
<div class="t" style="left:2187.00px;top:1303.48px;font-size:24px;line-height:24px;color:#000;transform:scaleX(1.0250);transform-origin:0 0;">1.5</div>
<div class="t" style="left:2232.50px;top:1303.48px;font-size:24px;line-height:24px;color:#000;transform:scaleX(1.0250);transform-origin:0 0;">428.57</div>
<div class="t" style="left:2446.50px;top:1303.48px;font-size:24px;line-height:24px;color:#000;transform:scaleX(1.0250);transform-origin:0 0;">23.33</div>
<div class="t" style="left:2654.50px;top:1303.48px;font-size:24px;line-height:24px;color:#000;transform:scaleX(1.0250);transform-origin:0 0;">14.29</div>
<div class="t" style="left:3075.50px;top:1303.48px;font-size:24px;line-height:24px;color:#000;transform:scaleX(1.0250);transform-origin:0 0;">14.29</div>
<div class="r" style="left:43px;top:1342px;width:3448px;height:1px;background:#ffffff;"></div>
<div class="r" style="left:43px;top:1343px;width:3448px;height:47px;background:#b3dafd;"></div>
<div class="r" style="left:2181px;top:1343px;width:46px;height:47px;background:#ff8080;"></div>
<div class="r" style="left:320px;top:1340px;width:2px;height:52px;background:#8e8e8e;"></div>
<div class="r" style="left:440px;top:1340px;width:2px;height:52px;background:#8e8e8e;"></div>
<div class="r" style="left:1824px;top:1340px;width:2px;height:52px;background:#8e8e8e;"></div>
<div class="r" style="left:2036px;top:1340px;width:2px;height:52px;background:#8e8e8e;"></div>
<div class="r" style="left:2178px;top:1340px;width:2px;height:52px;background:#8e8e8e;"></div>
<div class="r" style="left:2224px;top:1340px;width:2px;height:52px;background:#8e8e8e;"></div>
<div class="r" style="left:2438px;top:1340px;width:2px;height:52px;background:#8e8e8e;"></div>
<div class="r" style="left:2600px;top:1340px;width:2px;height:52px;background:#8e8e8e;"></div>
<div class="r" style="left:2646px;top:1340px;width:2px;height:52px;background:#8e8e8e;"></div>
<div class="r" style="left:3066px;top:1340px;width:2px;height:52px;background:#8e8e8e;"></div>
<div class="r" style="left:43px;top:1390px;width:3448px;height:2px;background:#8e8e8e;"></div>
<div class="t" style="left:49.00px;top:1352.78px;font-size:23.78px;line-height:23.78px;color:#000;font-family:'Liberation Mono', monospace;">0x140002b2a</div>
<div class="t" style="left:328.50px;top:1354.08px;font-size:24px;line-height:24px;color:#000;transform:scaleX(1.0250);transform-origin:0 0;">44</div>
<div class="t" style="left:449.00px;top:1352.78px;font-size:23.78px;line-height:23.78px;color:#000;font-family:'Liberation Mono', monospace;">addss xmm6, dword ptr [rcx]</div>
<div class="t" style="left:1911.37px;top:1353.48px;font-size:24px;line-height:24px;color:#000;transform:scaleX(1.0250);transform-origin:100% 0;">240500000</div>
<div class="t" style="left:2053.87px;top:1353.48px;font-size:24px;line-height:24px;color:#000;transform:scaleX(1.0250);transform-origin:100% 0;">109750000</div>
<div class="t" style="left:2187.00px;top:1353.48px;font-size:24px;line-height:24px;color:#000;transform:scaleX(1.0250);transform-origin:0 0;">2.1</div>
<div class="t" style="left:2232.50px;top:1353.48px;font-size:24px;line-height:24px;color:#000;transform:scaleX(1.0250);transform-origin:0 0;">603.64</div>
<div class="t" style="left:2446.50px;top:1353.48px;font-size:24px;line-height:24px;color:#000;transform:scaleX(1.0250);transform-origin:0 0;">14.11</div>
<div class="t" style="left:2654.50px;top:1353.48px;font-size:24px;line-height:24px;color:#000;transform:scaleX(1.0250);transform-origin:0 0;">23.69</div>
<div class="r" style="left:43px;top:1392px;width:3448px;height:1px;background:#ffffff;"></div>
<div class="r" style="left:43px;top:1393px;width:3448px;height:47px;background:#b3dafd;"></div>
<div class="r" style="left:2181px;top:1393px;width:46px;height:47px;background:#ff8080;"></div>
<div class="r" style="left:320px;top:1390px;width:2px;height:52px;background:#8e8e8e;"></div>
<div class="r" style="left:440px;top:1390px;width:2px;height:52px;background:#8e8e8e;"></div>
<div class="r" style="left:1824px;top:1390px;width:2px;height:52px;background:#8e8e8e;"></div>
<div class="r" style="left:2036px;top:1390px;width:2px;height:52px;background:#8e8e8e;"></div>
<div class="r" style="left:2178px;top:1390px;width:2px;height:52px;background:#8e8e8e;"></div>
<div class="r" style="left:2224px;top:1390px;width:2px;height:52px;background:#8e8e8e;"></div>
<div class="r" style="left:2438px;top:1390px;width:2px;height:52px;background:#8e8e8e;"></div>
<div class="r" style="left:2600px;top:1390px;width:2px;height:52px;background:#8e8e8e;"></div>
<div class="r" style="left:2646px;top:1390px;width:2px;height:52px;background:#8e8e8e;"></div>
<div class="r" style="left:3066px;top:1390px;width:2px;height:52px;background:#8e8e8e;"></div>
<div class="r" style="left:43px;top:1440px;width:3448px;height:2px;background:#8e8e8e;"></div>
<div class="t" style="left:49.00px;top:1402.78px;font-size:23.78px;line-height:23.78px;color:#000;font-family:'Liberation Mono', monospace;">0x140002b2e</div>
<div class="t" style="left:328.50px;top:1404.08px;font-size:24px;line-height:24px;color:#000;transform:scaleX(1.0250);transform-origin:0 0;">44</div>
<div class="t" style="left:449.00px;top:1402.78px;font-size:23.78px;line-height:23.78px;color:#000;font-family:'Liberation Mono', monospace;">addss xmm6, dword ptr [rcx + 8]</div>
<div class="t" style="left:1938.07px;top:1403.48px;font-size:24px;line-height:24px;color:#000;transform:scaleX(1.0250);transform-origin:100% 0;">6000000</div>
<div class="t" style="left:2080.57px;top:1403.48px;font-size:24px;line-height:24px;color:#000;transform:scaleX(1.0250);transform-origin:100% 0;">3750000</div>
<div class="t" style="left:2187.00px;top:1403.48px;font-size:24px;line-height:24px;color:#000;transform:scaleX(1.0250);transform-origin:0 0;">1.6</div>
<div class="t" style="left:2232.50px;top:1403.48px;font-size:24px;line-height:24px;color:#000;transform:scaleX(1.0250);transform-origin:0 0;">1733.33</div>
<div class="t" style="left:2446.50px;top:1403.48px;font-size:24px;line-height:24px;color:#000;transform:scaleX(1.0250);transform-origin:0 0;">9.62</div>
<div class="t" style="left:2654.50px;top:1403.48px;font-size:24px;line-height:24px;color:#000;transform:scaleX(1.0250);transform-origin:0 0;">13.33</div>
<div class="r" style="left:43px;top:1442px;width:3448px;height:1px;background:#ffffff;"></div>
<div class="r" style="left:43px;top:1443px;width:3448px;height:47px;background:#b3dafd;"></div>
<div class="r" style="left:2181px;top:1443px;width:46px;height:47px;background:#ff8080;"></div>
<div class="r" style="left:320px;top:1440px;width:2px;height:52px;background:#8e8e8e;"></div>
<div class="r" style="left:440px;top:1440px;width:2px;height:52px;background:#8e8e8e;"></div>
<div class="r" style="left:1824px;top:1440px;width:2px;height:52px;background:#8e8e8e;"></div>
<div class="r" style="left:2036px;top:1440px;width:2px;height:52px;background:#8e8e8e;"></div>
<div class="r" style="left:2178px;top:1440px;width:2px;height:52px;background:#8e8e8e;"></div>
<div class="r" style="left:2224px;top:1440px;width:2px;height:52px;background:#8e8e8e;"></div>
<div class="r" style="left:2438px;top:1440px;width:2px;height:52px;background:#8e8e8e;"></div>
<div class="r" style="left:2600px;top:1440px;width:2px;height:52px;background:#8e8e8e;"></div>
<div class="r" style="left:2646px;top:1440px;width:2px;height:52px;background:#8e8e8e;"></div>
<div class="r" style="left:3066px;top:1440px;width:2px;height:52px;background:#8e8e8e;"></div>
<div class="r" style="left:43px;top:1490px;width:3448px;height:2px;background:#8e8e8e;"></div>
<div class="t" style="left:49.00px;top:1452.78px;font-size:23.78px;line-height:23.78px;color:#000;font-family:'Liberation Mono', monospace;">0x140002b33</div>
<div class="t" style="left:328.50px;top:1454.08px;font-size:24px;line-height:24px;color:#000;transform:scaleX(1.0250);transform-origin:0 0;">44</div>
<div class="t" style="left:449.00px;top:1452.78px;font-size:23.78px;line-height:23.78px;color:#000;font-family:'Liberation Mono', monospace;">addss xmm6, dword ptr [rcx + 0xc]</div>
<div class="t" style="left:1938.07px;top:1453.48px;font-size:24px;line-height:24px;color:#000;transform:scaleX(1.0250);transform-origin:100% 0;">3750000</div>
<div class="t" style="left:2080.57px;top:1453.48px;font-size:24px;line-height:24px;color:#000;transform:scaleX(1.0250);transform-origin:100% 0;">3500000</div>
<div class="t" style="left:2187.00px;top:1453.48px;font-size:24px;line-height:24px;color:#000;transform:scaleX(1.0250);transform-origin:0 0;">1.0</div>
<div class="t" style="left:2232.50px;top:1453.48px;font-size:24px;line-height:24px;color:#000;transform:scaleX(1.0250);transform-origin:0 0;">571.43</div>
<div class="t" style="left:2446.50px;top:1453.48px;font-size:24px;line-height:24px;color:#000;transform:scaleX(1.0250);transform-origin:0 0;">20.00</div>
<div class="t" style="left:2654.50px;top:1453.48px;font-size:24px;line-height:24px;color:#000;transform:scaleX(1.0250);transform-origin:0 0;">21.43</div>
<div class="r" style="left:43px;top:1492px;width:3448px;height:1px;background:#ffffff;"></div>
<div class="r" style="left:43px;top:1493px;width:3448px;height:47px;background:#ffffff;"></div>
<div class="r" style="left:2181px;top:1493px;width:46px;height:47px;background:#ff8080;"></div>
<div class="r" style="left:320px;top:1490px;width:2px;height:52px;background:#8e8e8e;"></div>
<div class="r" style="left:440px;top:1490px;width:2px;height:52px;background:#8e8e8e;"></div>
<div class="r" style="left:1824px;top:1490px;width:2px;height:52px;background:#8e8e8e;"></div>
<div class="r" style="left:2036px;top:1490px;width:2px;height:52px;background:#8e8e8e;"></div>
<div class="r" style="left:2178px;top:1490px;width:2px;height:52px;background:#8e8e8e;"></div>
<div class="r" style="left:2224px;top:1490px;width:2px;height:52px;background:#8e8e8e;"></div>
<div class="r" style="left:2438px;top:1490px;width:2px;height:52px;background:#8e8e8e;"></div>
<div class="r" style="left:2600px;top:1490px;width:2px;height:52px;background:#8e8e8e;"></div>
<div class="r" style="left:2646px;top:1490px;width:2px;height:52px;background:#8e8e8e;"></div>
<div class="r" style="left:3066px;top:1490px;width:2px;height:52px;background:#8e8e8e;"></div>
<div class="r" style="left:43px;top:1540px;width:3448px;height:2px;background:#8e8e8e;"></div>
<div class="t" style="left:49.00px;top:1502.78px;font-size:23.78px;line-height:23.78px;color:#000;font-family:'Liberation Mono', monospace;">0x140002b38</div>
<div class="t" style="left:328.50px;top:1504.08px;font-size:24px;line-height:24px;color:#000;transform:scaleX(1.0250);transform-origin:0 0;">38</div>
<div class="t" style="left:449.00px;top:1502.78px;font-size:23.78px;line-height:23.78px;color:#000;font-family:'Liberation Mono', monospace;">add rax, 8</div>
<div class="t" style="left:1924.72px;top:1503.48px;font-size:24px;line-height:24px;color:#000;transform:scaleX(1.0250);transform-origin:100% 0;">16750000</div>
<div class="t" style="left:2080.57px;top:1503.48px;font-size:24px;line-height:24px;color:#000;transform:scaleX(1.0250);transform-origin:100% 0;">6750000</div>
<div class="t" style="left:2187.00px;top:1503.48px;font-size:24px;line-height:24px;color:#000;transform:scaleX(1.0250);transform-origin:0 0;">2.4</div>
<div class="t" style="left:2232.50px;top:1503.48px;font-size:24px;line-height:24px;color:#000;transform:scaleX(1.0250);transform-origin:0 0;">666.67</div>
<div class="t" style="left:2446.50px;top:1503.48px;font-size:24px;line-height:24px;color:#000;transform:scaleX(1.0250);transform-origin:0 0;">9.44</div>
<div class="t" style="left:2654.50px;top:1503.48px;font-size:24px;line-height:24px;color:#000;transform:scaleX(1.0250);transform-origin:0 0;">33.33</div>
<div class="r" style="left:43px;top:1542px;width:3448px;height:1px;background:#ffffff;"></div>
<div class="r" style="left:43px;top:1543px;width:3448px;height:47px;background:#ffffff;"></div>
<div class="r" style="left:320px;top:1540px;width:2px;height:52px;background:#8e8e8e;"></div>
<div class="r" style="left:440px;top:1540px;width:2px;height:52px;background:#8e8e8e;"></div>
<div class="r" style="left:1824px;top:1540px;width:2px;height:52px;background:#8e8e8e;"></div>
<div class="r" style="left:2036px;top:1540px;width:2px;height:52px;background:#8e8e8e;"></div>
<div class="r" style="left:2178px;top:1540px;width:2px;height:52px;background:#8e8e8e;"></div>
<div class="r" style="left:2224px;top:1540px;width:2px;height:52px;background:#8e8e8e;"></div>
<div class="r" style="left:2438px;top:1540px;width:2px;height:52px;background:#8e8e8e;"></div>
<div class="r" style="left:2600px;top:1540px;width:2px;height:52px;background:#8e8e8e;"></div>
<div class="r" style="left:2646px;top:1540px;width:2px;height:52px;background:#8e8e8e;"></div>
<div class="r" style="left:3066px;top:1540px;width:2px;height:52px;background:#8e8e8e;"></div>
<div class="r" style="left:43px;top:1590px;width:3448px;height:2px;background:#8e8e8e;"></div>
<div class="t" style="left:49.00px;top:1552.78px;font-size:23.78px;line-height:23.78px;color:#000;font-family:'Liberation Mono', monospace;">0x140002b3c</div>
<div class="t" style="left:328.50px;top:1554.08px;font-size:24px;line-height:24px;color:#000;transform:scaleX(1.0250);transform-origin:0 0;">38</div>
<div class="t" style="left:449.00px;top:1552.78px;font-size:23.78px;line-height:23.78px;color:#000;font-family:'Liberation Mono', monospace;">cmp rax, rdi</div>
<div class="r" style="left:3490px;top:1143px;width:1px;height:449px;background:#8a8a8a;"></div>
<div class="r" style="left:2646px;top:1144px;width:844px;height:398px;background:transparent;box-sizing:border-box;border:5px solid #ec1c24;"></div>
</body></html>
